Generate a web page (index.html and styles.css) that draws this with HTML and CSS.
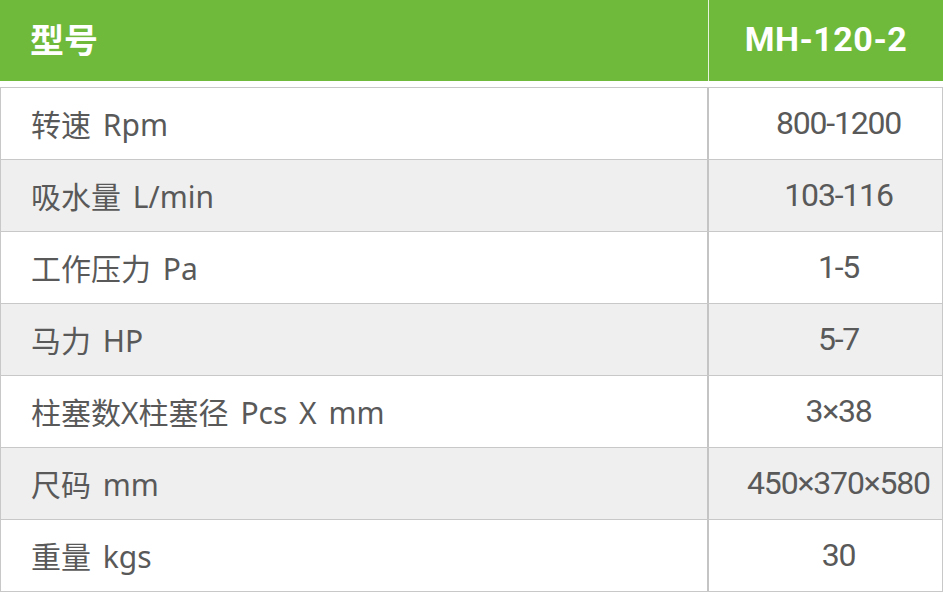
FILE: index.html
```html
<!DOCTYPE html>
<html lang="zh">
<head>
<meta charset="utf-8">
<link rel="stylesheet" href="styles.css">
</head>
<body>
<div class="spec">
  <div class="head">
    <div class="h-name">型号</div>
    <div class="h-val">MH-120-2</div>
  </div>
  <div class="rows">
    <div class="row"><div class="name">转速 Rpm</div><div class="val">800-1200</div></div>
    <div class="row alt"><div class="name">吸水量 L/min</div><div class="val">103-116</div></div>
    <div class="row"><div class="name">工作压力 Pa</div><div class="val">1-5</div></div>
    <div class="row alt"><div class="name">马力 HP</div><div class="val">5-7</div></div>
    <div class="row"><div class="name">柱塞数X柱塞径 Pcs X mm</div><div class="val">3×38</div></div>
    <div class="row alt"><div class="name">尺码 mm</div><div class="val">450×370×580</div></div>
    <div class="row"><div class="name">重量 kgs</div><div class="val">30</div></div>
  </div>
</div>
</body>
</html>
```
FILE: styles.css
```css
html, body {
  margin: 0;
  padding: 0;
  background: #fff;
}
.spec {
  width: 943px;
  font-family: "Noto Sans", "Noto Sans CJK SC", sans-serif;
}
.head {
  display: grid;
  grid-template-columns: 709px 1fr;
  height: 81px;
  background: #6fba3a;
  color: #fff;
  font-weight: 700;
}
.h-name {
  display: flex;
  align-items: center;
  padding-left: 30px;
  padding-bottom: 4px;
  font-size: 34px;
  border-right: 1px solid #e8f3df;
}
.h-val {
  display: flex;
  align-items: center;
  justify-content: center;
  font-family: Roboto, sans-serif;
  font-size: 34px;
  letter-spacing: 0.5px;
  padding-bottom: 4px;
}
.rows {
  margin-top: 6px;
  border: 1px solid #c8c8c8;
  border-top: 0;
}
.row {
  display: grid;
  grid-template-columns: 708px 1fr;
  height: 71px;
  border-top: 1px solid #c8c8c8;
  background: #fff;
  color: #595959;
  font-size: 30px;
}
.row.alt {
  background: #efefef;
}
.name {
  display: flex;
  align-items: center;
  padding-left: 30px;
  padding-bottom: 2px;
  word-spacing: 4px;
  white-space: pre;
  border-right: 2px solid #c4c4c4;
}
.val {
  display: flex;
  align-items: center;
  justify-content: center;
  padding-left: 26px;
  padding-bottom: 2px;
  font-family: Roboto, sans-serif;
  font-size: 32px;
  letter-spacing: -1.2px;
}
```
